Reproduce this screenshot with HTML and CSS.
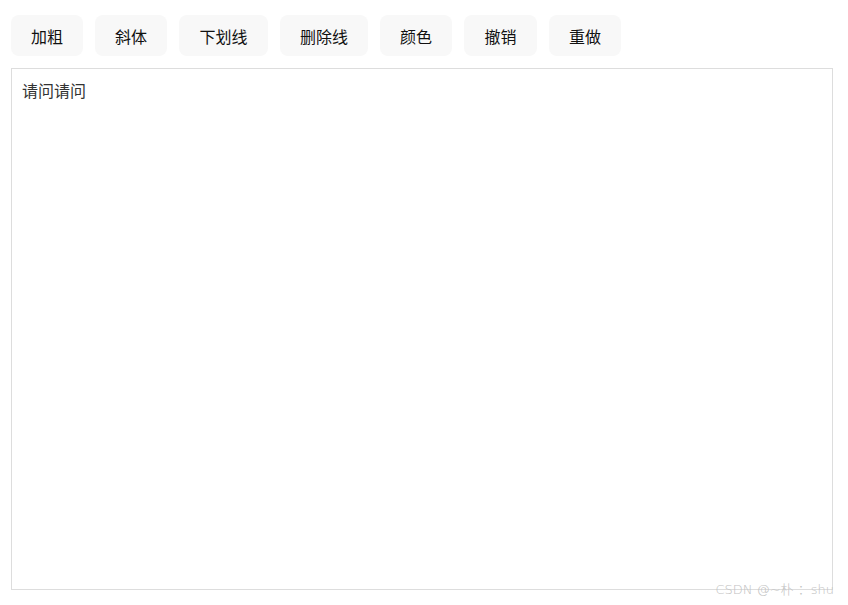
FILE: index.html
```html
<!DOCTYPE html>
<html lang="zh-CN">
<head>
  <meta charset="UTF-8">
  <title>富文本编辑器</title>
  <meta name="viewport" content="width=device-width, initial-scale=1.0">
  <link rel="stylesheet" href="styles.css">
</head>
<body>
  <div class="toolbar">
    <button class="btn">加粗</button>
    <button class="btn">斜体</button>
    <button class="btn wide">下划线</button>
    <button class="btn">删除线</button>
    <button class="btn">颜色</button>
    <button class="btn wide">撤销</button>
    <button class="btn">重做</button>
  </div>
  <div class="editor" contenteditable="true">请问请问</div>
  <div class="watermark">CSDN @~朴 ：shu</div>
</body>
</html>
```

FILE: styles.css
```css
body {
  margin: 0;
  padding: 15px 15px 15px 11px;
  background: #fff;
  font-family: "Noto Sans CJK SC", "Noto Sans", sans-serif;
  position: relative;
  min-height: 100vh;
  box-sizing: border-box;
}
.toolbar {
  display: flex;
  gap: 12px;
  margin-bottom: 12px;
}
.btn {
  height: 41px;
  padding: 0 20px;
  border: none;
  border-radius: 8px;
  background: #f8f8f8;
  color: #111;
  font-family: inherit;
  font-size: 16px;
  cursor: pointer;
}
.btn.wide {
  padding: 0 20.5px;
}
.editor {
  width: 822px;
  height: 522px;
  box-sizing: border-box;
  border: 1px solid #ddd;
  padding: 10px 10px;
  font-size: 16px;
  line-height: 22px;
  color: #333;
  outline: none;
}
.watermark {
  position: absolute;
  right: 14px;
  bottom: 7px;
  font-family: "DejaVu Sans", "Noto Sans CJK SC", sans-serif;
  font-weight: 300;
  font-size: 13px;
  color: #c2c2c2;
}
```
